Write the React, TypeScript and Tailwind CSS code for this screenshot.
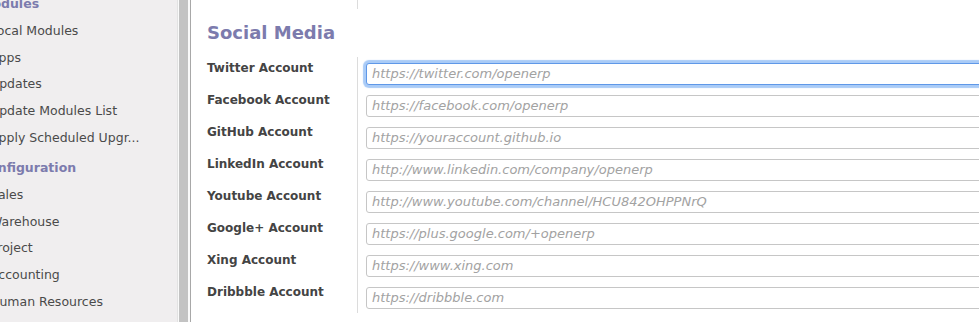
import React from "react";

const font = { fontFamily: '"DejaVu Sans", "Noto Sans", sans-serif' };

type MenuEntry = { label: string; header?: boolean };

const menu: MenuEntry[] = [
  { label: "Modules", header: true },
  { label: "Local Modules" },
  { label: "Apps" },
  { label: "Updates" },
  { label: "Update Modules List" },
  { label: "Apply Scheduled Upgr..." },
  { label: "Configuration", header: true },
  { label: "Sales" },
  { label: "Warehouse" },
  { label: "Project" },
  { label: "Accounting" },
  { label: "Human Resources" },
];

const fields = [
  { label: "Twitter Account", placeholder: "https://twitter.com/openerp", focused: true },
  { label: "Facebook Account", placeholder: "https://facebook.com/openerp" },
  { label: "GitHub Account", placeholder: "https://youraccount.github.io" },
  { label: "LinkedIn Account", placeholder: "http://www.linkedin.com/company/openerp" },
  { label: "Youtube Account", placeholder: "http://www.youtube.com/channel/HCU842OHPPNrQ" },
  { label: "Google+ Account", placeholder: "https://plus.google.com/+openerp" },
  { label: "Xing Account", placeholder: "https://www.xing.com" },
  { label: "Dribbble Account", placeholder: "https://dribbble.com" },
];

function Sidebar() {
  return (
    <div className="flex h-full shrink-0">
      <div className="w-[177px] h-full bg-[#f0eeef] overflow-hidden">
        <div className="-mt-[9px]">
          {menu.map((m, i) => (
            <div
              key={m.label}
              className={
                m.header
                  ? `h-[26.75px] flex items-center whitespace-nowrap -ml-[20px] text-[12.5px] font-bold text-[#7c7bad] ${i > 0 ? "mt-[3.5px]" : ""}`
                  : "h-[26.75px] flex items-center whitespace-nowrap -ml-[10px] text-[12.5px] text-[#4a4a4a]"
              }
            >
              {m.label}
            </div>
          ))}
        </div>
      </div>
      {/* scrollbar */}
      <div className="w-[14px] h-full flex bg-[#fafafa]">
        <div className="w-px bg-[#e2e2e2]" />
        <div className="w-px" />
        <div className="w-[9px] bg-[#c3c3c3]" />
        <div className="w-[2px]" />
        <div className="w-px bg-[#a8a8a8]" />
      </div>
    </div>
  );
}

export default function App() {
  return (
    <div className="flex w-[979px] h-[322px] overflow-hidden bg-white" style={font}>
      <Sidebar />
      <div className="flex-1 min-w-0 overflow-hidden">
        <div className="ml-[166px] w-px h-[9px] bg-[#dcdcdc]" />
        <h2 className="pl-[16px] mt-[12px] h-[24px] leading-[24px] text-[18px] font-bold text-[#7c7bad] whitespace-nowrap">
          Social Media
        </h2>
        <div className="mt-[12px] flex">
          <div className="w-[166px] shrink-0 pl-[16px]">
            {fields.map((f) => (
              <div key={f.label} className="h-[32px] pt-[3px] text-[12px] leading-[16px] font-bold text-[#444444] whitespace-nowrap">
                {f.label}
              </div>
            ))}
          </div>
          <div className="w-[660px] shrink-0 border-l border-[#dcdcdc] pl-[8px]">
            {fields.map((f) => (
              <div key={f.label} className="h-[32px] pt-[4px]">
                <input
                  readOnly
                  placeholder={f.placeholder}
                  className={
                    f.focused
                      ? "w-full h-[22px] px-[5px] rounded-[3px] border border-[#5f98e8] shadow-[0_0_1px_3px_#a9cbf7] outline-none text-[13px] italic placeholder:text-[#a2a2a2] bg-white"
                      : "w-full h-[22px] px-[5px] rounded-[3px] border border-[#c6c6c6] outline-none text-[13px] italic placeholder:text-[#a2a2a2] bg-white"
                  }
                  style={font}
                />
              </div>
            ))}
          </div>
        </div>
      </div>
    </div>
  );
}
